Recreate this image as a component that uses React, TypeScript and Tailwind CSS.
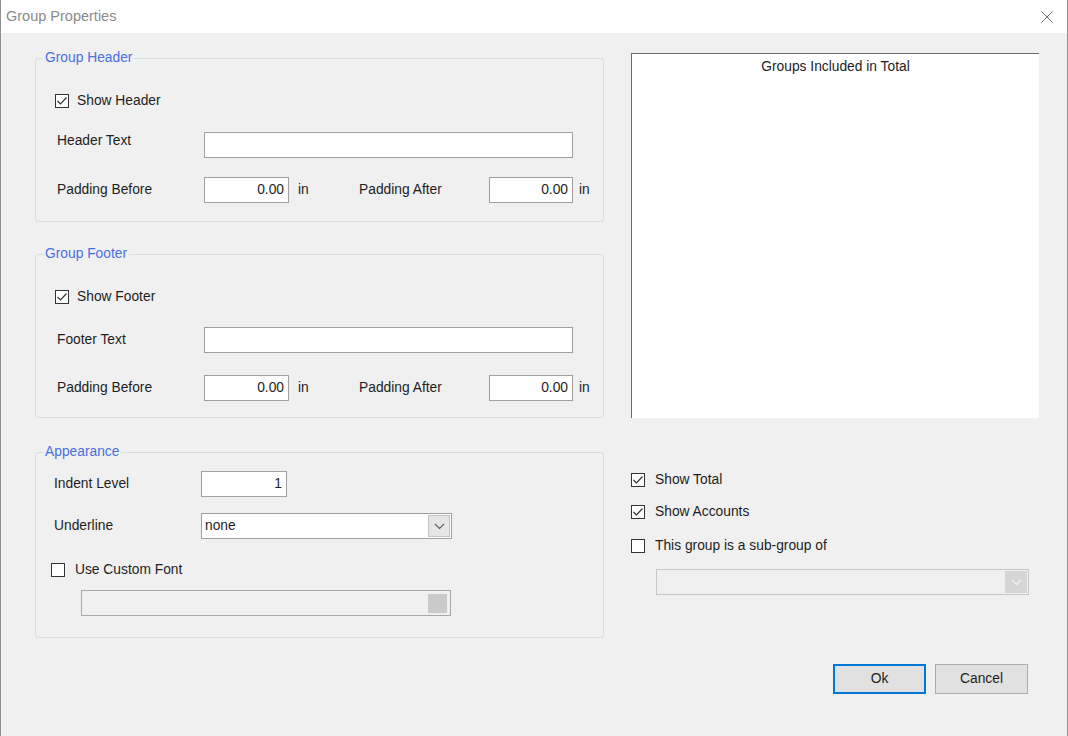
import React from 'react';

const font = { fontFamily: '"Liberation Sans", Arial, sans-serif' };

function Check({ checked }: { checked?: boolean }) {
  return (
    <span className="w-[14px] h-[14px] border border-[#333] bg-white flex items-center justify-center shrink-0">
      {checked && (
        <svg width="12" height="12" viewBox="0 0 12 12">
          <polyline points="1.5,6 4.5,9 10.5,2.5" fill="none" stroke="#333" strokeWidth="1.2" />
        </svg>
      )}
    </span>
  );
}

function CheckRow({ checked, label, gap = 'gap-[8px]' }: { checked?: boolean; label: string; gap?: string }) {
  return (
    <div className={`flex items-center h-[26px] ${gap}`}>
      <Check checked={checked} />
      <span>{label}</span>
    </div>
  );
}

function TextBox({ value = '', w }: { value?: string; w: string }) {
  return (
    <div className={`${w} h-[26px] bg-white border border-[#a0a0a0] flex items-center justify-end pr-[4px]`}>
      {value}
    </div>
  );
}

function Chevron({ color }: { color: string }) {
  return (
    <svg width="11" height="7" viewBox="0 0 11 7">
      <polyline points="1,1 5.5,5.5 10,1" fill="none" stroke={color} strokeWidth="1.2" />
    </svg>
  );
}

function PaddingRow() {
  return (
    <div className="flex items-center h-[26px] pl-[2px]">
      <span className="w-[147px]">Padding Before</span>
      <TextBox value="0.00" w="w-[85px]" />
      <span className="ml-[9px] w-[61px]">in</span>
      <span className="w-[130px]">Padding After</span>
      <TextBox value="0.00" w="w-[84px]" />
      <span className="ml-[6px]">in</span>
    </div>
  );
}

function Legend({ children }: { children: React.ReactNode }) {
  return (
    <legend className="ml-[7px] px-[2px] leading-[14px] pt-[1px] pb-[2px] text-[#4a6fe0]">{children}</legend>
  );
}

export default function App() {
  return (
    <div
      style={font}
      className="w-[1068px] h-[736px] bg-[#f0f0f0] border-x border-[#8f8f8f] text-[13.8px] text-[#1e1e1e] flex flex-col overflow-hidden"
    >
      {/* title bar */}
      <div className="h-[33px] bg-white flex items-center justify-between pl-[5px] pr-[14px] shrink-0">
        <span className="text-[14.5px] text-[#8a8a8a]">Group Properties</span>
        <svg width="12" height="12" viewBox="0 0 12 12">
          <path d="M0.5 0.5 L11.5 11.5 M11.5 0.5 L0.5 11.5" stroke="#6e6e6e" strokeWidth="1" />
        </svg>
      </div>

      <div className="flex pl-[34px] pt-[17px]">
        {/* left column */}
        <div className="w-[569px] flex flex-col">
          <fieldset className="border border-[#d6dde3] rounded-[3px]">
            <Legend>Group Header</Legend>
            <div className="pl-[19px] pb-[18px] flex flex-col">
              <div className="mt-[21px]">
                <CheckRow checked label="Show Header" />
              </div>
              <div className="mt-[18px] flex items-center h-[26px] pl-[2px]">
                <span className="w-[147px] -mt-[8px]">Header Text</span>
                <TextBox w="w-[369px]" />
              </div>
              <div className="mt-[19px]">
                <PaddingRow />
              </div>
            </div>
          </fieldset>

          <fieldset className="mt-[24px] border border-[#d6dde3] rounded-[3px]">
            <Legend>Group Footer</Legend>
            <div className="pl-[19px] pb-[16px] flex flex-col">
              <div className="mt-[21px]">
                <CheckRow checked label="Show Footer" />
              </div>
              <div className="mt-[17px] flex items-center h-[26px] pl-[2px]">
                <span className="w-[147px]">Footer Text</span>
                <TextBox w="w-[369px]" />
              </div>
              <div className="mt-[22px]">
                <PaddingRow />
              </div>
            </div>
          </fieldset>

          <fieldset className="mt-[26px] border border-[#d6dde3] rounded-[3px]">
            <Legend>Appearance</Legend>
            <div className="pl-[15px] pb-[21px] flex flex-col">
              <div className="mt-[10px] flex items-center h-[26px] pl-[3px]">
                <span className="w-[147px]">Indent Level</span>
                <TextBox value="1" w="w-[86px]" />
              </div>
              <div className="mt-[16px] flex items-center h-[26px] pl-[3px]">
                <span className="w-[147px]">Underline</span>
                <div className="w-[251px] h-[26px] bg-white border border-[#a0a0a0] flex items-center justify-between pl-[3px] pr-[1px]">
                  <span>none</span>
                  <div className="w-[22px] h-[22px] bg-[#e6e6e6] border border-[#c4c4c4] flex items-center justify-center">
                    <Chevron color="#606060" />
                  </div>
                </div>
              </div>
              <div className="mt-[18px]">
                <CheckRow label="Use Custom Font" gap="gap-[10px]" />
              </div>
              <div className="mt-[7px] ml-[30px] w-[370px] h-[26px] bg-[#f0f0f0] border border-[#a8a8a8] flex items-center justify-end pr-[3px]">
                <div className="w-[19px] h-[19px] bg-[#cacaca]" />
              </div>
            </div>
          </fieldset>
        </div>

        {/* right column */}
        <div className="ml-[27px] w-[408px] flex flex-col pt-[3px]">
          <div className="h-[365px] bg-white border-t border-l border-[#6a6a6a] flex justify-center pt-[5px]">
            <span className="leading-[16px]">Groups Included in Total</span>
          </div>
          <div className="mt-[49px] flex flex-col">
            <CheckRow checked label="Show Total" gap="gap-[10px]" />
            <div className="mt-[6px]">
              <CheckRow checked label="Show Accounts" gap="gap-[10px]" />
            </div>
            <div className="mt-[8px]">
              <CheckRow label="This group is a sub-group of" gap="gap-[10px]" />
            </div>
            <div className="mt-[10px] ml-[25px] w-[373px] h-[26px] bg-[#f0f0f0] border border-[#c8c8c8] flex items-center justify-end pr-[1px]">
              <div className="w-[22px] h-[22px] bg-[#d6d6d6] flex items-center justify-center">
                <Chevron color="#f4f4f4" />
              </div>
            </div>
          </div>
        </div>
      </div>

      {/* buttons */}
      <div className="mt-[26px] flex justify-end gap-[9px] pr-[39px]">
        <button className="w-[93px] h-[30px] bg-[#e1e1e1] border-2 border-[#0078d7] text-[#1e1e1e]">Ok</button>
        <button className="w-[93px] h-[30px] bg-[#e1e1e1] border border-[#adadad] text-[#1e1e1e]">Cancel</button>
      </div>
    </div>
  );
}
